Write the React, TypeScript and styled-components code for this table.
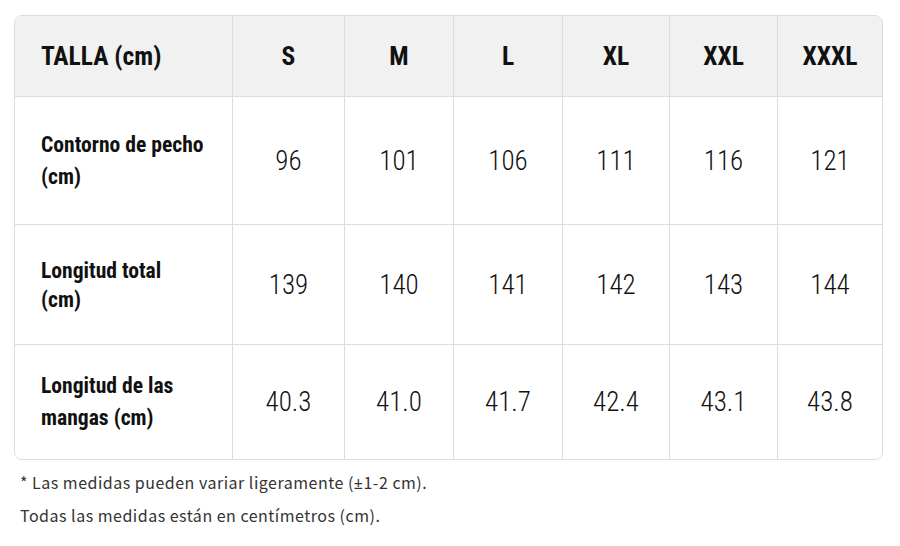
import React from 'react'
import styled, { createGlobalStyle } from 'styled-components'

const GlobalStyle = createGlobalStyle`
  html, body {
    margin: 0;
    padding: 0;
    background: #ffffff;
  }
`

const Page = styled.div`
  width: 900px;
  height: 546px;
  box-sizing: border-box;
  padding: 15px 17px 0 14px;
  background: #ffffff;
`

const Table = styled.div`
  display: grid;
  grid-template-columns: 218px 112px 109px 109px 107px 108px 1fr;
  grid-template-rows: 81px 128px 120px 114px;
  border: 1px solid #dcdcdc;
  border-radius: 8px;
  overflow: hidden;
  box-sizing: border-box;
  font-family: Roboto, "Liberation Sans", sans-serif;
  font-stretch: condensed;
  color: #111111;
`

const Cell = styled.div<{ $head?: boolean; $label?: boolean; $lastCol?: boolean; $lastRow?: boolean; $tight?: boolean }>`
  display: flex;
  align-items: center;
  justify-content: ${p => (p.$label ? 'flex-start' : 'center')};
  padding-left: ${p => (p.$label ? '26px' : '0')};
  box-sizing: border-box;
  background: ${p => (p.$head ? '#f1f1f1' : '#ffffff')};
  border-right: ${p => (p.$lastCol ? 'none' : '1px solid #dcdcdc')};
  border-bottom: ${p => (p.$lastRow ? 'none' : '1px solid #dcdcdc')};
  font-size: ${p => (p.$head ? '25.5px' : p.$label ? '21.6px' : '27px')};
  font-weight: ${p => (p.$head || p.$label ? 700 : 350)};
  line-height: ${p => (p.$tight ? '29px' : '32px')};
`

const Notes = styled.div`
  padding: 6px 0 0 6px;
  font-family: "Noto Sans CJK JP", "Noto Sans", sans-serif;
  font-size: 16px;
  line-height: 32px;
  letter-spacing: 0.5px;
  color: #333333;
`

const Sign = styled.span`
  font-family: "Noto Sans", sans-serif;
`

const sizes = ['S', 'M', 'L', 'XL', 'XXL', 'XXXL']

const rows: { label: string[]; values: string[]; tight?: boolean }[] = [
  { label: ['Contorno de pecho', '(cm)'], values: ['96', '101', '106', '111', '116', '121'] },
  { label: ['Longitud total', '(cm)'], values: ['139', '140', '141', '142', '143', '144'], tight: true },
  { label: ['Longitud de las', 'mangas (cm)'], values: ['40.3', '41.0', '41.7', '42.4', '43.1', '43.8'] },
]

export default function App() {
  return (
    <Page>
      <GlobalStyle />
      <Table>
        <Cell $head $label>TALLA (cm)</Cell>
        {sizes.map((s, i) => (
          <Cell key={s} $head $lastCol={i === sizes.length - 1}>
            {s}
          </Cell>
        ))}
        {rows.map((r, ri) => (
          <React.Fragment key={ri}>
            <Cell $label $tight={r.tight} $lastRow={ri === rows.length - 1}>
              <span>
                {r.label[0]}
                <br />
                {r.label[1]}
              </span>
            </Cell>
            {r.values.map((v, i) => (
              <Cell key={i} $lastCol={i === r.values.length - 1} $lastRow={ri === rows.length - 1}>
                {v}
              </Cell>
            ))}
          </React.Fragment>
        ))}
      </Table>
      <Notes>
        <div>* Las medidas pueden variar ligeramente (<Sign>±</Sign>1-2 cm).</div>
        <div>Todas las medidas están en centímetros (cm).</div>
      </Notes>
    </Page>
  )
}
